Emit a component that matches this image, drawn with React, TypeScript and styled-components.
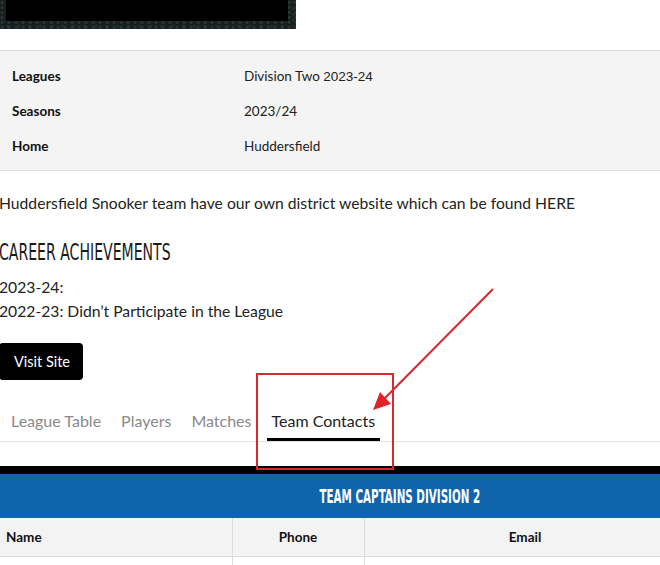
import styled, { createGlobalStyle } from 'styled-components';

const GlobalStyle = createGlobalStyle`
  html, body {
    margin: 0;
    padding: 0;
    background: #fff;
    overflow: hidden;
  }
  body {
    font-family: Lato, "Noto Sans", sans-serif;
    color: #222;
    width: 660px;
    height: 565px;
  }
`;

const Page = styled.div`
  position: relative;
  width: 660px;
  height: 565px;
  overflow: hidden;
`;

const Banner = styled.div`
  width: 296px;
  height: 29px;
  box-sizing: border-box;
  padding: 0 8px 8px 6px;
  background-color: #17201f;
  background-image:
    radial-gradient(circle at 30% 50%, rgba(60, 85, 85, 0.45) 0 1px, transparent 2px),
    radial-gradient(circle at 70% 40%, rgba(45, 70, 72, 0.4) 0 1px, transparent 2px);
  background-size: 7px 5px, 11px 6px;
`;

const BannerInner = styled.div`
  height: 100%;
  background: #000;
`;

const InfoTable = styled.div`
  margin-top: 21px;
  background: #f4f4f4;
  border-top: 1px solid #dedede;
  border-bottom: 1px solid #dedede;
  padding: 7px 0 7px;
`;

const InfoRow = styled.div`
  display: grid;
  grid-template-columns: 232px 1fr;
  height: 35px;
  align-items: center;
  padding-left: 12px;
  font-size: 13.5px;
`;

const InfoLabel = styled.div`
  font-weight: 700;
  color: #111;
`;

const InfoValue = styled.div`
  color: #222;
`;

const ArialBit = styled.span`
  font-family: "Liberation Sans", Arial, sans-serif;
`;

const Body = styled.div`
  margin-left: -1px;
`;

const Para = styled.p`
  margin: 21px 0 0;
  font-size: 15.7px;
  line-height: 22px;
`;

const Heading = styled.h2`
  margin: 25px 0 0;
  font-family: "Liberation Sans Narrow", "DejaVu Sans Condensed", sans-serif;
  font-weight: 400;
  font-size: 23px;
  line-height: 26px;
  color: #1a1a1a;
  transform: scaleX(0.68);
  transform-origin: left center;
  white-space: nowrap;
`;

const Lines = styled.div`
  margin-top: 10px;
  font-size: 15.7px;
  line-height: 24px;
`;

const VisitButton = styled.button`
  margin-top: 20px;
  display: block;
  height: 37px;
  width: 84px;
  margin-left: -1px;
  border: none;
  border-radius: 4px;
  background: #000;
  color: #fff;
  font-family: Lato, sans-serif;
  font-size: 14.5px;
  padding: 0 0 0 2px;
`;

const Tabs = styled.div`
  margin-top: 31px;
  display: flex;
  border-bottom: 1px solid #e2e2e2;
  padding-left: 6px;
`;

const Tab = styled.div<{ $active?: boolean }>`
  padding: 2px 5px 0;
  margin-right: 10px;
  height: 30px;
  box-sizing: border-box;
  font-size: 16px;
  line-height: 16px;
  color: ${(p) => (p.$active ? '#222' : '#8a8a8a')};
  border-bottom: 3px solid ${(p) => (p.$active ? '#000' : 'transparent')};
`;

const Contacts = styled.div`
  margin-top: 24px;
  border-top: 8px solid #000;
`;

const ContactsTitle = styled.div`
  background: #1064ab;
  height: 44px;
  display: flex;
  align-items: center;
  justify-content: center;
  padding-left: 140px;
  font-family: "Liberation Sans Narrow", "DejaVu Sans Condensed", sans-serif;
  font-weight: 700;
  font-size: 19px;
  color: #fff;
`;

const TitleText = styled.span`
  display: inline-block;
  transform: scaleX(0.605);
  white-space: nowrap;
`;

const Grid = styled.table`
  border-collapse: collapse;
  width: 700px;
  table-layout: fixed;
  font-size: 13.5px;
`;

const HeadCell = styled.th<{ $align?: string; $w: number }>`
  box-sizing: border-box;
  width: ${(p) => p.$w}px;
  background: #f3f3f3;
  height: 38px;
  padding: 0 6px;
  text-align: ${(p) => p.$align || 'center'};
  font-weight: 700;
  color: #111;
  border: 1px solid #dcdcdc;
  border-top: none;
  &:first-child { border-left: none; }
`;

const Cell = styled.td`
  height: 30px;
  border: 1px solid #dcdcdc;
  &:first-child { border-left: none; }
`;

const Annotation = styled.svg`
  position: absolute;
  left: 0;
  top: 0;
  pointer-events: none;
`;

export default function App() {
  return (
    <Page>
      <GlobalStyle />
      <Banner>
        <BannerInner />
      </Banner>
      <InfoTable>
        <InfoRow>
          <InfoLabel>Leagues</InfoLabel>
          <InfoValue>
            Division Two <ArialBit>2023-24</ArialBit>
          </InfoValue>
        </InfoRow>
        <InfoRow>
          <InfoLabel>Seasons</InfoLabel>
          <InfoValue>2023/24</InfoValue>
        </InfoRow>
        <InfoRow>
          <InfoLabel>Home</InfoLabel>
          <InfoValue>Huddersfield</InfoValue>
        </InfoRow>
      </InfoTable>
      <Body>
        <Para>Huddersfield Snooker team have our own district website which can be found HERE</Para>
        <Heading>CAREER ACHIEVEMENTS</Heading>
        <Lines>
          <div>2023-24:</div>
          <div>2022-23: Didn’t Participate in the League</div>
        </Lines>
      </Body>
      <VisitButton>Visit Site</VisitButton>
      <Tabs>
        <Tab>League Table</Tab>
        <Tab>Players</Tab>
        <Tab>Matches</Tab>
        <Tab $active>Team Contacts</Tab>
      </Tabs>
      <Contacts>
        <ContactsTitle>
          <TitleText>TEAM CAPTAINS DIVISION 2</TitleText>
        </ContactsTitle>
        <Grid>
          <thead>
            <tr>
              <HeadCell $w={232} $align="left">Name</HeadCell>
              <HeadCell $w={132}>Phone</HeadCell>
              <HeadCell $w={322}>Email</HeadCell>
              <HeadCell $w={14} />
            </tr>
          </thead>
          <tbody>
            <tr>
              <Cell />
              <Cell />
              <Cell />
              <Cell />
            </tr>
          </tbody>
        </Grid>
      </Contacts>
      <Annotation width="660" height="565" viewBox="0 0 660 565">
        <rect x="257" y="374" width="136" height="95" fill="none" stroke="#d9272e" strokeWidth="2" />
        <line x1="493" y1="289" x2="384" y2="399" stroke="#d9272e" strokeWidth="2" />
        <polygon points="373,410 380,392 391,404" fill="#e3232b" />
      </Annotation>
    </Page>
  );
}
